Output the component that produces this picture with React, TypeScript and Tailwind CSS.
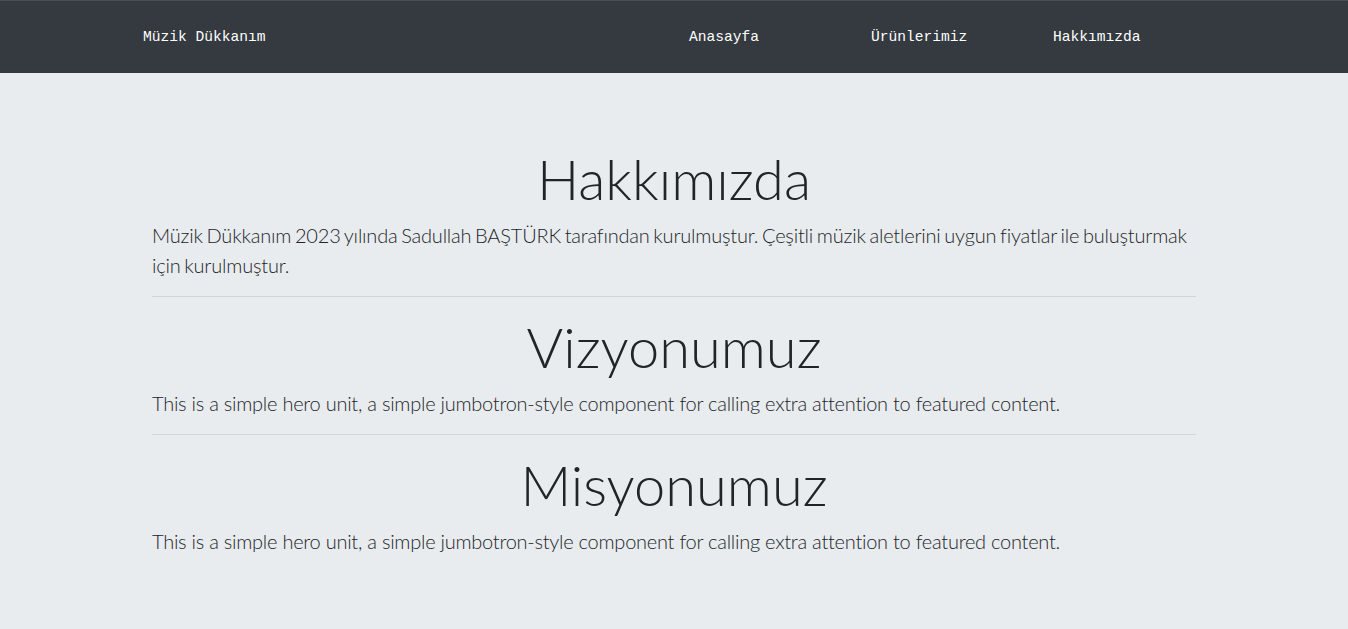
const NAV_LINKS = ['Anasayfa', 'Ürünlerimiz', 'Hakkımızda']

const SECTIONS = [
  {
    title: 'Hakkımızda',
    text: 'Müzik Dükkanım 2023 yılında Sadullah BAŞTÜRK tarafından kurulmuştur. Çeşitli müzik aletlerini uygun fiyatlar ile buluşturmak için kurulmuştur.',
    fit: 'tracking-[-0.2px] [word-spacing:-1.5px]',
  },
  {
    title: 'Vizyonumuz',
    text: 'This is a simple hero unit, a simple jumbotron-style component for calling extra attention to featured content.',
    fit: 'tracking-[-0.25px]',
  },
  {
    title: 'Misyonumuz',
    text: 'This is a simple hero unit, a simple jumbotron-style component for calling extra attention to featured content.',
    fit: 'tracking-[-0.25px]',
  },
]

function Navbar() {
  return (
    <nav className="h-[73px] bg-[#343a40] border-t border-[#4b4f54] flex items-center font-['Liberation_Mono',monospace] text-[14.6px] text-white">
      <div className="pl-[143px] pt-[2px] flex-1">Müzik Dükkanım</div>
      <ul className="flex pt-[2px] pr-[113px]">
        {NAV_LINKS.map((link) => (
          <li key={link} className="w-[182px]">
            {link}
          </li>
        ))}
      </ul>
    </nav>
  )
}

export default function App() {
  return (
    <div className="min-h-[629px] bg-[#e9ecef] text-[#212529] font-['Lato',sans-serif]">
      <Navbar />
      <main className="px-[152px] pt-[72px] pb-16">
        {SECTIONS.map((s, i) => (
          <section key={s.title}>
            {i > 0 && <hr className="my-4 border-t border-[#d3d6d9]" />}
            <h1 className="text-center text-[56px] leading-[67px] font-light mb-2">
              {s.title}
            </h1>
            <p className={`text-[20px] leading-[30px] font-light ${s.fit}`}>{s.text}</p>
          </section>
        ))}
      </main>
    </div>
  )
}
